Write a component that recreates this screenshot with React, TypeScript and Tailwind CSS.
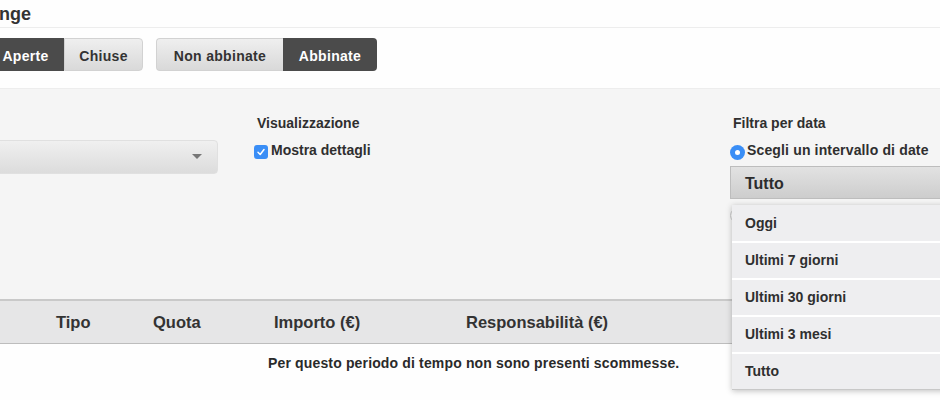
import React from "react";

const font = { fontFamily: '"Liberation Sans", Arial, Helvetica, sans-serif' };

function Check() {
  return (
    <span className="flex h-[14px] w-[14px] shrink-0 items-center justify-center rounded-[3px] bg-[#3a8ef6]">
      <svg width="10" height="10" viewBox="0 0 10 10">
        <path d="M2 5.3 L4.2 7.5 L8 2.5" stroke="#fff" strokeWidth="1.5" fill="none" strokeLinecap="round" strokeLinejoin="round" />
      </svg>
    </span>
  );
}

export default function App() {
  const items = ["Oggi", "Ultimi 7 giorni", "Ultimi 30 giorni", "Ultimi 3 mesi", "Tutto"];
  return (
    <div className="relative h-[400px] w-[940px] overflow-hidden bg-[#fefefe] text-[#2f2f2f]" style={font}>
      {/* title */}
      <div className="flex h-[28px] items-center border-b border-[#ededed]">
        <h1 className="ml-[-54px] text-[18px] font-bold leading-none text-[#333]">Exchange</h1>
      </div>
      {/* button band */}
      <div className="flex h-[61px] items-start gap-[13px] border-b border-[#ededed] pt-[10px]">
        <div className="ml-[-13px] flex h-[33px] text-[14px] font-bold tracking-[0.3px]">
          <div className="flex w-[77px] items-center justify-center rounded-l-[4px] bg-[#4b4b4b] pt-[3px] text-white">Aperte</div>
          <div className="flex w-[79px] items-center justify-center rounded-r-[4px] border border-[#d2d2d2] bg-gradient-to-b from-[#efefef] to-[#d9d9d9] pt-[3px] text-[#333]">Chiuse</div>
        </div>
        <div className="flex h-[33px] text-[14px] font-bold tracking-[0.3px]">
          <div className="flex w-[127px] items-center justify-center rounded-l-[4px] border border-r-0 border-[#d2d2d2] bg-gradient-to-b from-[#efefef] to-[#d9d9d9] pt-[3px] text-[#333]">Non abbinate</div>
          <div className="flex w-[94px] items-center justify-center rounded-r-[4px] bg-[#4b4b4b] pt-[3px] text-white">Abbinate</div>
        </div>
      </div>
      {/* filter panel */}
      <div className="flex h-[210px] bg-[#f5f5f5] pt-[26px]">
        <div className="w-[218px] shrink-0 pt-[25px]">
          <div className="ml-[-20px] flex h-[34px] w-[238px] items-center justify-end rounded-[4px] border border-[#e0e0e0] bg-gradient-to-b from-[#f0f0f0] to-[#dcdcdc] pr-[15px]">
            <svg width="10" height="6" viewBox="0 0 10 6">
              <path d="M0 0 L10 0 L5 5 Z" fill="#777" />
            </svg>
          </div>
        </div>
        <div className="ml-[36px] w-[476px] shrink-0">
          <div className="ml-[3px] text-[14px] font-bold leading-[17px]">Visualizzazione</div>
          <div className="mt-[10px] flex items-start gap-[3px]">
            <div className="mt-[3px]"><Check /></div>
            <span className="text-[14px] font-bold leading-[17px]">Mostra dettagli</span>
          </div>
        </div>
        <div className="relative w-[220px] shrink-0">
          <div className="ml-[3px] text-[14px] font-bold leading-[17px]">Filtra per data</div>
          <div className="mt-[10px] flex items-start gap-[2px]">
            <span className="mt-[3px] flex h-[15px] w-[15px] items-center justify-center rounded-full bg-[#3a8ef6]">
              <span className="h-[5px] w-[5px] rounded-full bg-white" />
            </span>
            <span className="text-[14px] font-bold leading-[17px] tracking-[0.15px]">Scegli un intervallo di date</span>
          </div>
          <div className="mt-[6px] flex h-[33px] items-center border border-[#bdbdbd] bg-gradient-to-b from-[#e2e2e2] to-[#cdcdcd] pl-[14px] pt-[2px] text-[16px] font-bold text-[#2c2c2c]">
            Tutto
          </div>
          <div className="mt-[9px] h-[15px] w-[15px] rounded-full border border-[#c9c9c9] bg-white" />
          {/* dropdown menu */}
          <div className="absolute left-[2px] top-[90px] w-[240px] border-b border-[#c8c8c8] bg-white shadow-[0_1px_6px_rgba(0,0,0,0.25)]">
            {items.map((t, i) => (
              <div
                key={t}
                className={
                  i === 0
                    ? "flex h-[36px] items-center bg-[#eeeef0] pl-[13px] text-[14px] font-bold"
                    : "mt-[2px] flex h-[35px] items-center bg-[#eeeef0] pl-[13px] text-[14px] font-bold"
                }
              >
                {t}
              </div>
            ))}
          </div>
        </div>
      </div>
      {/* table header */}
      <div className="flex h-[45px] items-center border-t-2 border-b border-[#c9c9c9] border-b-[#bdbdbd] bg-[#e6e6e7] pl-[56px] text-[16.5px] font-bold text-[#333]">
        <div className="w-[97px]">Tipo</div>
        <div className="w-[121px]">Quota</div>
        <div className="w-[192px]">Importo (€)</div>
        <div>Responsabilità (€)</div>
      </div>
      <div className="pl-[268px] pt-[11px] text-[14px] font-bold leading-[16px] tracking-[0.15px] text-[#2a2a2a]">
        Per questo periodo di tempo non sono presenti scommesse.
      </div>
    </div>
  );
}
